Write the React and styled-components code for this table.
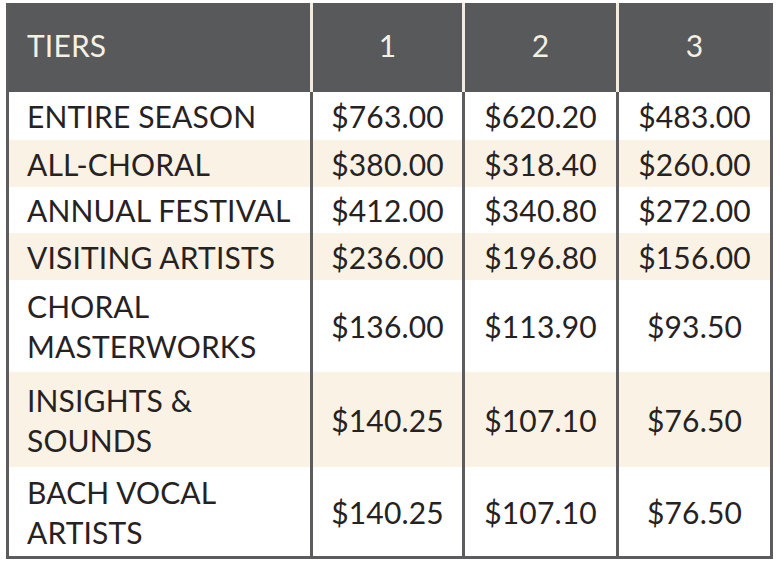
import React from "react";
import styled, { createGlobalStyle } from "styled-components";

const GlobalStyle = createGlobalStyle`
  body {
    margin: 0;
    background: #ffffff;
    font-family: "Lato", "Noto Sans", sans-serif;
  }
`;

const Page = styled.div`
  padding: 3px 0 0 6px;
`;

const Table = styled.div`
  width: 764px;
  display: flex;
  flex-direction: column;
  border-right: 3px solid #5c5c5e;
  border-bottom: 3px solid #5c5c5e;
`;

const Row = styled.div`
  display: grid;
  grid-template-columns: 304px 152px 154px 154px;
  height: ${(props) => props.$height}px;
  background-color: ${(props) =>
    props.$header ? "#58595b" : props.$cream ? "#faf2e4" : "#ffffff"};
`;

const Cell = styled.div`
  display: flex;
  align-items: center;
  justify-content: ${(props) => (props.$label ? "flex-start" : "center")};
  padding: ${(props) => (props.$label ? "0 0 0 18px" : "0")};
  padding-bottom: ${(props) => (props.$header ? "5px" : "0")};
  border-left: 3px solid
    ${(props) => (props.$header && !props.$label ? "#f3ecdc" : "#5c5c5e")};
  color: ${(props) => (props.$header ? "#f6f0e2" : "#262223")};
  font-size: 30px;
  line-height: 40px;
  letter-spacing: 0.15px;
  white-space: pre-line;
`;

const rows = [
  { name: "ENTIRE SEASON", prices: ["$763.00", "$620.20", "$483.00"], h: 48 },
  { name: "ALL-CHORAL", prices: ["$380.00", "$318.40", "$260.00"], h: 47 },
  { name: "ANNUAL FESTIVAL", prices: ["$412.00", "$340.80", "$272.00"], h: 46 },
  { name: "VISITING ARTISTS", prices: ["$236.00", "$196.80", "$156.00"], h: 47 },
  { name: "CHORAL\nMASTERWORKS", prices: ["$136.00", "$113.90", "$93.50"], h: 92 },
  { name: "INSIGHTS &\nSOUNDS", prices: ["$140.25", "$107.10", "$76.50"], h: 95 },
  { name: "BACH VOCAL\nARTISTS", prices: ["$140.25", "$107.10", "$76.50"], h: 89 },
];

export default function App() {
  return (
    <>
      <GlobalStyle />
      <Page>
        <Table>
          <Row $header $height={89}>
            <Cell $header $label>TIERS</Cell>
            <Cell $header>1</Cell>
            <Cell $header>2</Cell>
            <Cell $header>3</Cell>
          </Row>
          {rows.map((row, i) => (
            <Row key={row.name} $height={row.h} $cream={i % 2 === 1}>
              <Cell $label>{row.name}</Cell>
              {row.prices.map((p, j) => (
                <Cell key={j}>{p}</Cell>
              ))}
            </Row>
          ))}
        </Table>
      </Page>
    </>
  );
}
